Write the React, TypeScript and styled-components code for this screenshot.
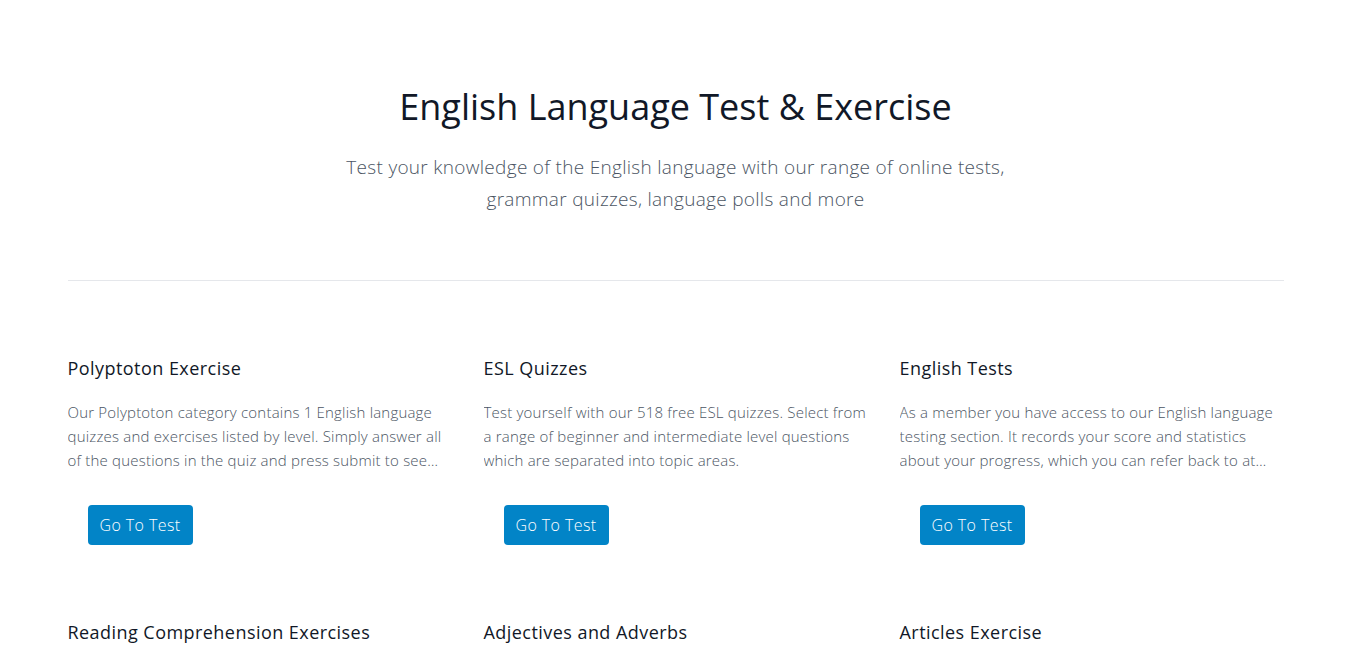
import React from "react";
import styled, { createGlobalStyle } from "styled-components";

const Global = createGlobalStyle`
  html, body { margin: 0; padding: 0; background: #fff; }
  body { font-family: "Open Sans", "Noto Sans", sans-serif; -webkit-font-smoothing: antialiased; }
  * { box-sizing: border-box; }
`;

const Page = styled.div`
  width: 1216px;
  margin: 0 auto;
  padding-top: 83px;
`;

const Hero = styled.header`
  display: flex;
  flex-direction: column;
  align-items: center;
  text-align: center;
  padding-bottom: 65px;
  border-bottom: 1px solid #e5e7eb;
`;

const Title = styled.h1`
  margin: 0;
  font-size: 36px;
  line-height: 48px;
  font-weight: 500;
  color: #111827;
  letter-spacing: 0;
`;

const Subtitle = styled.p`
  margin: 20px 0 0;
  max-width: 690px;
  font-size: 19px;
  line-height: 32px;
  font-weight: 300;
  letter-spacing: 0.3px;
  color: #4b5563;
`;

const Grid = styled.section`
  display: grid;
  grid-template-columns: repeat(3, 384px);
  column-gap: 32px;
  row-gap: 73px;
  padding-top: 73px;
`;

const Card = styled.article`
  display: flex;
  flex-direction: column;
  align-items: flex-start;
`;

const CardTitle = styled.h3`
  margin: 0;
  font-size: 18px;
  line-height: 28px;
  font-weight: 500;
  letter-spacing: 0.45px;
  color: #111827;
`;

const CardText = styled.p`
  margin: 18px 0 0;
  font-size: 15px;
  line-height: 24px;
  font-weight: 300;
  letter-spacing: 0.2px;
  color: #4b5563;
  display: -webkit-box;
  -webkit-line-clamp: 3;
  -webkit-box-orient: vertical;
  overflow: hidden;
`;

const Button = styled.a`
  display: inline-flex;
  align-items: center;
  justify-content: center;
  margin: 33px 0 0 20px;
  height: 40px;
  padding: 0 12px;
  background: #0284c7;
  color: #fff;
  border-radius: 4px;
  font-size: 16px;
  font-weight: 300;
  letter-spacing: 0.4px;
  text-decoration: none;
`;

const cards = [
  {
    title: "Polyptoton Exercise",
    text: "Our Polyptoton category contains 1 English language quizzes and exercises listed by level. Simply answer all of the questions in the quiz and press submit to see your score and the correct answers.",
  },
  {
    title: "ESL Quizzes",
    text: "Test yourself with our 518 free ESL quizzes. Select from a range of beginner and intermediate level questions which are separated into topic areas.",
  },
  {
    title: "English Tests",
    text: "As a member you have access to our English language testing section. It records your score and statistics about your progress, which you can refer back to at any time to check your improvement.",
  },
  {
    title: "Reading Comprehension Exercises",
    text: "Our Reading Comprehension category contains English language quizzes and exercises listed by level.",
  },
  {
    title: "Adjectives and Adverbs",
    text: "Our Adjectives and Adverbs category contains English language quizzes and exercises listed by level.",
  },
  {
    title: "Articles Exercise",
    text: "Our Articles category contains English language quizzes and exercises listed by level.",
  },
];

export default function App() {
  return (
    <>
      <Global />
      <Page>
        <Hero>
          <Title>English Language Test &amp; Exercise</Title>
          <Subtitle>
            Test your knowledge of the English language with our range of online tests,
            grammar quizzes, language polls and more
          </Subtitle>
        </Hero>
        <Grid>
          {cards.map((c) => (
            <Card key={c.title}>
              <CardTitle>{c.title}</CardTitle>
              <CardText>{c.text}</CardText>
              <Button href="#">Go To Test</Button>
            </Card>
          ))}
        </Grid>
      </Page>
    </>
  );
}
